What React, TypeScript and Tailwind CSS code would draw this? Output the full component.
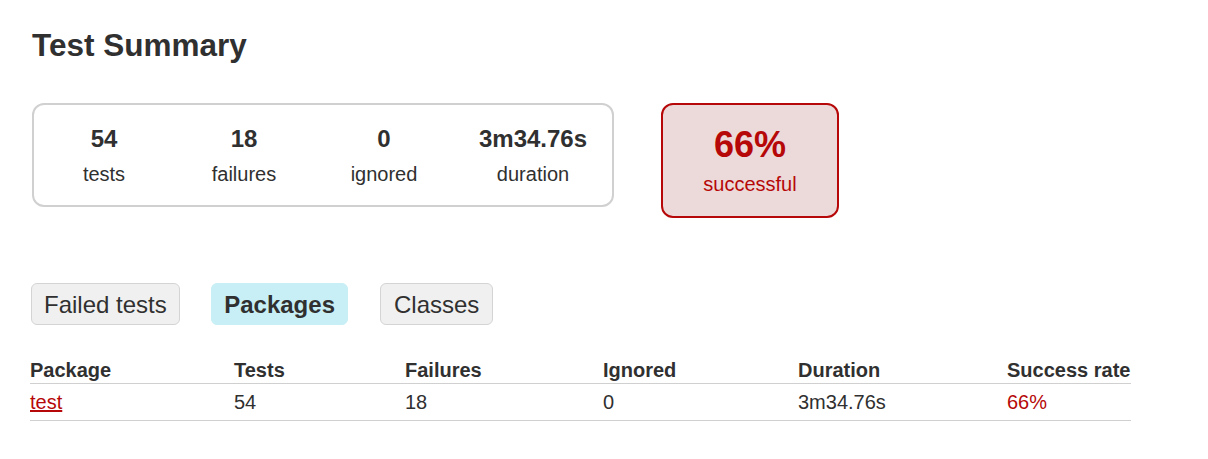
import React from 'react';

const counters = [
  { value: '54', label: 'tests', width: 'w-[140px]' },
  { value: '18', label: 'failures', width: 'w-[140px]' },
  { value: '0', label: 'ignored', width: 'w-[140px]' },
  { value: '3m34.76s', label: 'duration', width: 'w-[158px]' },
];

const tabs = [
  { name: 'Failed tests', active: false, spacing: 'px-[12px]' },
  { name: 'Packages', active: true, spacing: 'ml-[31px] px-[12.5px]' },
  { name: 'Classes', active: false, spacing: 'ml-[32px] px-[12.5px]' },
];

const headers = ['Package', 'Tests', 'Failures', 'Ignored', 'Duration', 'Success rate'];

export default function App() {
  return (
    <div className="min-h-screen bg-white pl-[31px] pt-[27px] text-[#303030] font-['Liberation_Sans',Arial,sans-serif]">
      <h1 className="ml-px text-[31.5px] font-bold leading-[36px]">Test Summary</h1>

      {/* summary boxes */}
      <div className="mt-[40px] flex items-start">
        <div className="ml-px flex rounded-[12px] border-2 border-[#d0d0d0]">
          {counters.map((c) => (
            <div key={c.label} className={`${c.width} pt-[20px] pb-[19px] text-center`}>
              <div className="mb-[10px] text-[24px] font-bold leading-[28px]">{c.value}</div>
              <div className="text-[20px] leading-[23px]">{c.label}</div>
            </div>
          ))}
        </div>
        <div className="ml-[47px] w-[178px] rounded-[12px] border-2 border-[#b60808] bg-[#ecdada] pt-[19px] pb-[20px] text-center text-[#b60808]">
          <div className="mb-[8px] text-[36px] font-bold leading-[41px]">66%</div>
          <div className="text-[20px] leading-[23px]">successful</div>
        </div>
      </div>

      {/* tabs */}
      <div className="mt-[65px] flex">
        {tabs.map((t) =>
          t.active ? (
            <button
              key={t.name}
              className={`${t.spacing} rounded-[6px] border border-[#c7eff5] bg-[#c7eff5] pt-[8px] pb-[6px] text-[24px] font-bold leading-[26px] text-[#303030]`}
            >
              {t.name}
            </button>
          ) : (
            <button
              key={t.name}
              className={`${t.spacing} rounded-[6px] border border-[#d4d4d4] bg-[#f0f0f0] pt-[8px] pb-[6px] text-[24px] leading-[26px] text-[#303030]`}
            >
              {t.name}
            </button>
          )
        )}
      </div>

      {/* packages table */}
      <div className="mt-[34px] ml-[-1px] w-[1101px] text-[20px] leading-[23px]">
        <div className="grid grid-cols-[204px_171px_198px_195px_209px_124px] border-b border-[#d0d0d0]">
          {headers.map((h) => (
            <div key={h} className="pb-[1px] font-bold">{h}</div>
          ))}
        </div>
        <div className="grid grid-cols-[204px_171px_198px_195px_209px_124px] border-b border-[#d0d0d0]">
          <div className="pt-[7px] pb-[6px]">
            <a href="#" className="text-[#b60808] underline">test</a>
          </div>
          <div className="pt-[7px] pb-[6px]">54</div>
          <div className="pt-[7px] pb-[6px]">18</div>
          <div className="pt-[7px] pb-[6px]">0</div>
          <div className="pt-[7px] pb-[6px]">3m34.76s</div>
          <div className="pt-[7px] pb-[6px] text-[#b60808]">66%</div>
        </div>
      </div>
    </div>
  );
}
